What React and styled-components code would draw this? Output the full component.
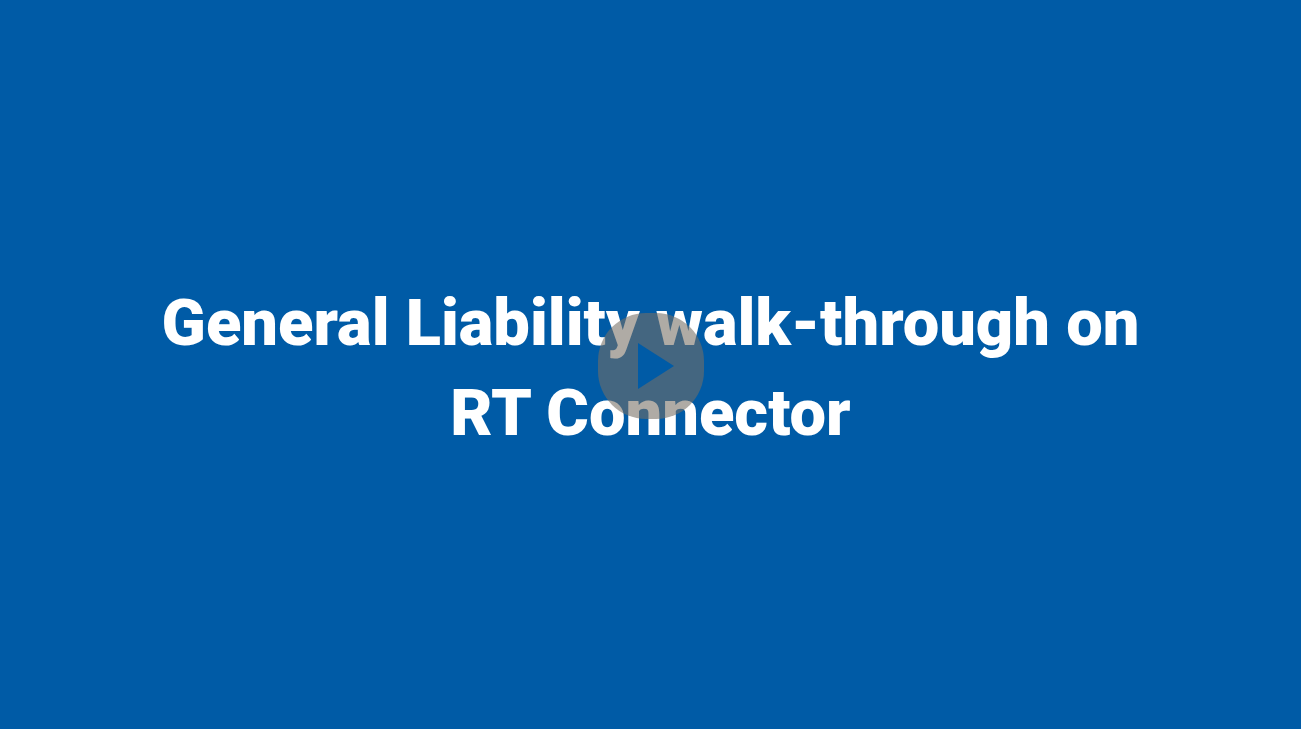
import React from 'react'
import styled, { createGlobalStyle } from 'styled-components'

const blue = '#005ba6'

const GlobalStyle = createGlobalStyle`
  body {
    margin: 0;
    background-color: ${blue};
  }
`

const Player = styled.main`
  display: grid;
  place-items: center;
  box-sizing: border-box;
  min-height: 100vh;
  padding-top: 3px;
  background-color: ${blue};

  & > * {
    grid-area: 1 / 1;
  }
`

const Title = styled.h1`
  margin: 0;
  padding-top: 4px;
  color: white;
  font-family: Roboto, 'Liberation Sans', sans-serif;
  font-size: 65px;
  font-weight: 900;
  line-height: 90px;
  text-align: center;
`

const PlayButton = styled.button`
  display: flex;
  align-items: center;
  justify-content: center;
  box-sizing: border-box;
  width: 106px;
  height: 106px;
  padding: 0 0 0 10px;
  border: none;
  border-radius: 48px;
  background-color: rgba(117, 110, 100, 0.58);
  cursor: pointer;
`

const PlayIcon = styled.svg`
  width: 36px;
  height: 46px;
  fill: ${blue};
`

const App = () =>
  <Player>
    <GlobalStyle />
    <Title>
      General Liability walk-through on
      <br />
      RT Connector
    </Title>
    <PlayButton type="button" aria-label="Play">
      <PlayIcon viewBox="0 0 36 46" aria-hidden="true">
        <path d="M0 0 L36 23 L0 46 Z" />
      </PlayIcon>
    </PlayButton>
  </Player>

export default App
